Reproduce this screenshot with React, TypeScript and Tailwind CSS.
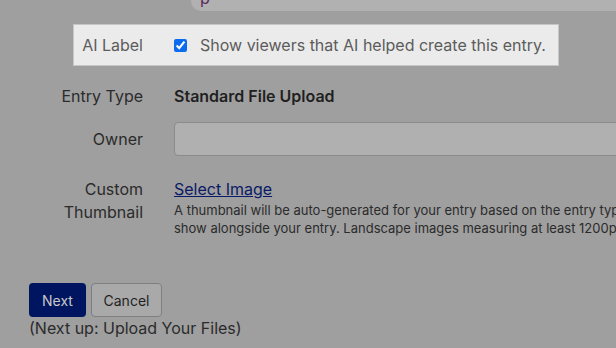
import React from "react";

const font = { fontFamily: "Inter, 'Noto Sans', sans-serif" };

export default function App() {
  return (
    <div
      className="relative h-[348px] w-[616px] overflow-hidden bg-[#9f9f9f] text-[#2b2b2b]"
      style={font}
    >
      {/* textarea above, cut off */}
      <div className="ml-[191px] h-[11px] overflow-hidden rounded-bl-[10px] bg-[#b1b1b1]">
        <div className="-mt-[12px] pl-[9px] text-[16px] leading-[20px] text-[#5a2a5a]">p</div>
      </div>

      {/* highlighted AI label row */}
      <div className="ml-[73px] mt-[13px] flex h-[42px] w-[486px] items-center border border-[#c6c6c6] bg-[#ebebeb] text-[16px] text-[#5c5c5c]">
        <div className="w-[69px] text-right">AI Label</div>
        <input
          type="checkbox"
          defaultChecked
          className="ml-[31px] h-[13px] w-[13px] accent-[#0b6cf0]"
        />
        <span className="ml-[13px]">Show viewers that AI helped create this entry.</span>
      </div>

      <div className="mt-[18px] grid grid-cols-[143px_1fr] gap-x-[31px] text-[16px]">
        <div className="text-right leading-[24px]">Entry Type</div>
        <div className="font-semibold leading-[24px] text-[#1f1f1f]">Standard File Upload</div>

        <div className="mt-[14px] flex h-[34px] items-center justify-end">Owner</div>
        <div className="mt-[14px] h-[34px] w-[460px] rounded-[4px] border border-[#8a8a8a] bg-[#b0b0b0]" />

        <div className="mt-[22px] text-right leading-[23px]">
          Custom
          <br />
          Thumbnail
        </div>
        <div className="mt-[22px]">
          <a href="#" className="block leading-[23px] text-[#0a1a66] underline">
            Select Image
          </a>
          <p className="w-[442px] overflow-hidden whitespace-nowrap text-[13px] leading-[18px]">
            A thumbnail will be auto-generated for your entry based on the entry type, but you can choose a custom image to
            <br />
            show alongside your entry. Landscape images measuring at least 1200px wide work best.
          </p>
        </div>
      </div>

      <div className="ml-[29px] mt-[46px] flex gap-[5px] text-[14px]">
        <button className="h-[34px] w-[57px] rounded-[4px] bg-[#00155f] text-[#c8c8c8]">Next</button>
        <button className="h-[34px] w-[71px] rounded-[4px] border border-[#7f7f7f] bg-[#a9a9a9] text-[#1f1f1f]">
          Cancel
        </button>
      </div>
      <div className="ml-[29px] text-[16px] leading-[22px]">(Next up: Upload Your Files)</div>
    </div>
  );
}
